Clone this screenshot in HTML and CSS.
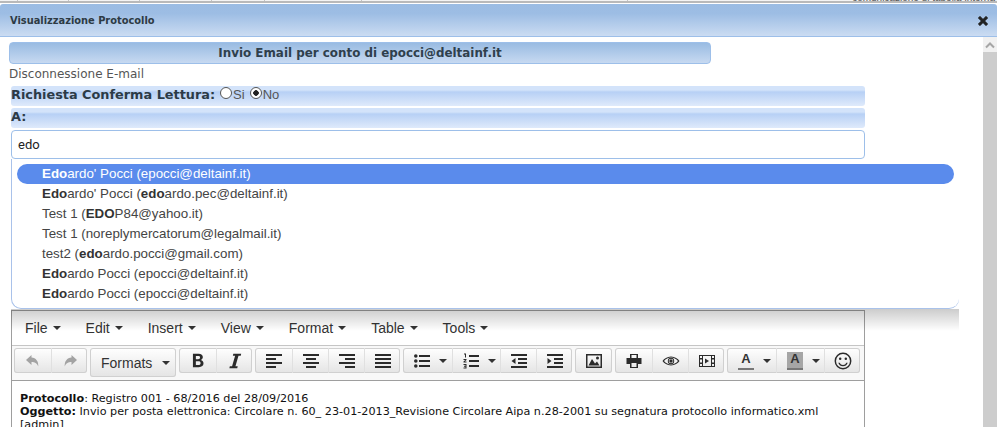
FILE: index.html
```html
<!DOCTYPE html>
<html lang="it">
<head>
<meta charset="utf-8">
<title>Visualizzazione Protocollo</title>
<link rel="stylesheet" href="styles.css">
</head>
<body>
<div class="strip">
  <span class="cell c1"></span><span class="cell c2"></span><span class="cell c3"></span><span class="cell c4"></span><span class="cell c5"></span><span class="cell c6"></span><span class="cell c7"></span>
  <span class="strip-text">comunicazione di tabella interna</span>
</div>
<div class="modal">
  <header class="modal-head">
    <span class="modal-title">Visualizzazione Protocollo</span>
    <svg class="close" viewBox="0 0 12 12" width="12" height="12"><path d="M3 1.200 6 4.200 9 1.200 10.800 3 7.800 6 10.800 9 9 10.800 6 7.800 3 10.800 1.200 9 4.200 6 1.200 3z" fill="#222" stroke="#222" stroke-width=".6" stroke-linejoin="round"/></svg>
  </header>
  <div class="modal-body">
    <main class="content">
      <div class="banner">Invio Email per conto di epocci@deltainf.it</div>
      <div class="disconnect">Disconnessione E-mail</div>
      <div class="field-bar">
        <b class="field-label">Richiesta Conferma Lettura:</b>
        <label class="radio-wrap"><span class="radio"></span>Si</label>
        <label class="radio-wrap"><span class="radio radio-on"></span>No</label>
      </div>
      <div class="field-bar"><b class="field-label">A:</b></div>
      <div class="input-box">edo</div>
      <div class="suggest-anchor">
        <ul class="suggest">
          <li class="active"><b>Edo</b>ardo' Pocci (epocci@deltainf.it)</li>
          <li><b>Edo</b>ardo' Pocci (<b>edo</b>ardo.pec@deltainf.it)</li>
          <li>Test 1 (<b>EDO</b>P84@yahoo.it)</li>
          <li>Test 1 (noreplymercatorum@legalmail.it)</li>
          <li>test2 (<b>edo</b>ardo.pocci@gmail.com)</li>
          <li><b>Edo</b>ardo Pocci (epocci@deltainf.it)</li>
          <li><b>Edo</b>ardo Pocci (epocci@deltainf.it)</li>
        </ul>
        <div class="suggest-shadow"></div>
      </div>
      <section class="editor">
        <nav class="menubar">
          <span class="menu">File<i class="caret"></i></span>
          <span class="menu">Edit<i class="caret"></i></span>
          <span class="menu">Insert<i class="caret"></i></span>
          <span class="menu">View<i class="caret"></i></span>
          <span class="menu">Format<i class="caret"></i></span>
          <span class="menu">Table<i class="caret"></i></span>
          <span class="menu">Tools<i class="caret"></i></span>
        </nav>
        <div class="toolbar">
          <div class="group">
            <span class="btn w36 off"><svg viewBox="0 0 16 16" width="16" height="16"><path d="M6.500 2 1 7l5.500 5V9c3.200 0 5.300 1 6.800 4.500C13.500 8 11 5 6.500 4.500z"/></svg></span>
            <span class="btn w36 off"><svg viewBox="0 0 16 16" width="16" height="16"><path d="M9.500 2 15 7l-5.500 5V9c-3.200 0-5.300 1-6.800 4.500C2.500 8 5 5 9.500 4.500z"/></svg></span>
          </div>
          <div class="group tall"><span class="btn formats">Formats<i class="caret caret-wide"></i></span></div>
          <div class="group">
            <span class="btn w36"><svg viewBox="0 0 16 16" width="18" height="18"><path fill-rule="evenodd" d="M3.500 1.500h5c2.500 0 3.800 1.100 3.800 3 0 1.300-.7 2.200-1.800 2.600 1.500.3 2.400 1.400 2.400 3 0 2.200-1.500 3.400-4.200 3.400H3.500zm2.600 2v2.900h2c1.100 0 1.700-.5 1.700-1.500s-.6-1.400-1.700-1.400zm0 4.800v3.200h2.300c1.200 0 1.900-.6 1.900-1.600s-.7-1.600-1.900-1.600z"/></svg></span>
            <span class="btn w36"><svg viewBox="0 0 16 16" width="18" height="18"><path d="M6.500 1.500h7l-.4 1.800h-2L8.400 12.700h2l-.4 1.800H3l.4-1.800h2l2.700-9.400h-2z"/></svg></span>
          </div>
          <div class="group">
            <span class="btn w36"><svg viewBox="0 0 16 16" width="16" height="16"><path d="M0 1h16v2H0zM0 5h10v2H0zM0 9h16v2H0zM0 13h10v2H0z"/></svg></span>
            <span class="btn w36"><svg viewBox="0 0 16 16" width="16" height="16"><path d="M0 1h16v2H0zM3 5h10v2H3zM0 9h16v2H0zM3 13h10v2H3z"/></svg></span>
            <span class="btn w36"><svg viewBox="0 0 16 16" width="16" height="16"><path d="M0 1h16v2H0zM6 5h10v2H6zM0 9h16v2H0zM6 13h10v2H6z"/></svg></span>
            <span class="btn w36"><svg viewBox="0 0 16 16" width="16" height="16"><path d="M0 1h16v2H0zM0 5h16v2H0zM0 9h16v2H0zM0 13h16v2H0z"/></svg></span>
          </div>
          <div class="group">
            <span class="btn w48"><svg viewBox="0 0 16 16" width="16" height="16"><path d="M5 2h11v2H5zM5 7h11v2H5zM5 12h11v2H5z"/><circle cx="1.800" cy="3" r="1.800"/><circle cx="1.800" cy="8" r="1.800"/><circle cx="1.800" cy="13" r="1.800"/></svg><i class="caret"></i></span>
            <span class="btn w48"><svg viewBox="0 0 16 16" width="16" height="16"><path d="M6 2h10v2H6zM6 7h10v2H6zM6 12h10v2H6zM1 .5h2v4H2V1.500H1zM.500 6h3v1L1.800 8.500h1.700v1h-3v-1L2.200 7H.500zM.500 11h3v4.500h-3v-1h2v-.8h-1.500v-.9h1.500V12h-2z"/></svg><i class="caret"></i></span>
            <span class="btn w36"><svg viewBox="0 0 16 16" width="16" height="16"><path d="M0 1h16v2H0zM7 5h9v2H7zM7 9h9v2H7zM0 13h16v2H0zM4.500 5v6L.500 8z"/></svg></span>
            <span class="btn w36"><svg viewBox="0 0 16 16" width="16" height="16"><path d="M0 1h16v2H0zM7 5h9v2H7zM7 9h9v2H7zM0 13h16v2H0zM.500 5v6l4-3z"/></svg></span>
          </div>
          <div class="group">
            <span class="btn w36"><svg viewBox="0 0 16 16" width="16" height="16"><path fill-rule="evenodd" d="M0 1h16v14H0zm1.500 1.500v11h13v-11z"/><path d="M2.500 12.500 6 6l3 4.500 2-2 2.500 4z"/><circle cx="11.500" cy="5" r="1.500"/></svg></span>
          </div>
          <div class="group">
            <span class="btn w36"><svg viewBox="0 0 16 16" width="16" height="16"><path fill-rule="evenodd" d="M4 1h8v4h3.500v6H12v4H4v-4H.500V5H4zm1.500 1v3h5V2zm0 8v4h5v-4z"/></svg></span>
            <span class="btn w36"><svg viewBox="0 0 18 16" width="18" height="16"><path fill-rule="evenodd" d="M9 3.500c3.900 0 6.900 2.200 8.500 4.500C15.900 10.300 12.900 12.500 9 12.500S2.100 10.300.500 8C2.100 5.700 5.100 3.500 9 3.500zm0 1C6.300 4.500 3.800 5.900 2 8c1.800 2.100 4.300 3.500 7 3.500s5.200-1.400 7-3.500c-1.800-2.100-4.300-3.500-7-3.500z"/><path fill-rule="evenodd" d="M9 4.800a3.200 3.200 0 1 1 0 6.400 3.200 3.200 0 0 1 0-6.400zm0 .9a2.300 2.300 0 1 0 0 4.600 2.300 2.300 0 0 0 0-4.600z"/><circle cx="9" cy="8" r="1.700"/></svg></span>
            <span class="btn w36"><svg viewBox="0 0 16 16" width="16" height="16"><path fill-rule="evenodd" d="M0 2h16v12H0zm1 1v2h2V3zm0 3.500v3h2v-3zM1 11v2h2v-2zM13 3v2h2V3zm0 3.500v3h2v-3zm0 4.500v2h2v-2zM4 3v10h8V3z"/><path d="M6 5.500v5L10 8z"/></svg></span>
          </div>
          <div class="group">
            <span class="btn w48"><span class="color-a">A</span><i class="caret"></i></span>
            <span class="btn w48"><span class="color-a color-bg">A</span><i class="caret"></i></span>
            <span class="btn w36"><svg viewBox="0 0 16 16" width="18" height="18"><path fill-rule="evenodd" d="M8 .5a7.500 7.500 0 1 1 0 15 7.500 7.500 0 0 1 0-15zm0 1.300a6.200 6.200 0 1 0 0 12.400A6.200 6.200 0 0 0 8 1.800z"/><circle cx="5.500" cy="6" r="1.100"/><circle cx="10.500" cy="6" r="1.100"/><path d="M3.800 9.500h1.300c.6 1.300 1.600 2 2.900 2s2.300-.7 2.900-2h1.300c-.7 2-2.200 3.200-4.200 3.200S4.500 11.500 3.800 9.500z"/></svg></span>
          </div>
        </div>
        <div class="editor-text">
          <div><b>Protocollo</b>: Registro 001 - 68/2016 del 28/09/2016</div>
          <div><b>Oggetto:</b> Invio per posta elettronica: Circolare n. 60_ 23-01-2013_Revisione Circolare Aipa n.28-2001 su segnatura protocollo informatico.xml</div>
          <div>[admin]</div>
        </div>
      </section>
    </main>
    <aside class="scrollbar"><div class="scroll-up"><svg viewBox="0 0 10 8" width="10" height="8"><path d="M1 6.500 5 2.500l4 4" fill="none" stroke="#a6a6a6" stroke-width="2"/></svg></div></aside>
  </div>
</div>
</body>
</html>
```
FILE: styles.css
```css
html, body { margin: 0; padding: 0; height: 427px; overflow: hidden; background: #fff; }
body { font-family: "Liberation Sans", Arial, sans-serif; color: #333; }
.strip { height: 4px; box-sizing: border-box; overflow: hidden; display: flex; background: linear-gradient(#f4f4f4 0, #f4f4f4 1px, #b9b9b9 1px, #b9b9b9 3px, #fff 3px); }
.cell { display: block; height: 1px; box-sizing: border-box; border-right: 1px solid #c4c4c4; flex: none; }
.c1 { width: 18px; } .c2 { width: 51px; } .c3 { width: 71px; } .c4 { width: 72px; } .c5 { width: 53px; } .c6 { width: 97px; } .c7 { width: 266px; }
.strip-text { display: block; flex: 1; text-align: right; font-size: 10px; line-height: 10px; margin-top: -7px; color: #555; padding-right: 2px; }
.modal { height: 423px; display: flex; flex-direction: column; }
.modal-head { height: 33px; box-sizing: border-box; flex: none; display: flex; align-items: center; justify-content: space-between; padding: 0 8px 0 10px; background: linear-gradient(#9bbce3 0, #9dbde4 30%, #cbdcf2 100%); border-bottom: 1px solid #9dbfe9; border-radius: 3px 3px 0 0; }
.modal-title { font: bold 9.850px "DejaVu Sans", sans-serif; color: #2d3a44; }
.close { display: block; margin-top: 1px; }
.modal-body { flex: 1; min-height: 0; display: flex; }
.content { flex: 1; min-width: 0; padding: 5px 0 0 0; overflow: hidden; }
.banner { width: 702px; height: 22px; box-sizing: border-box; margin-left: 9px; border: 1px solid #9dbfe9; border-radius: 4px; background: linear-gradient(#99bbe2, #c7d9f1); font: bold 11.900px/20px "DejaVu Sans", sans-serif; color: #2f3f4c; text-align: center; }
.disconnect { margin: 2px 0 0 9px; font: 12px/17px "DejaVu Sans", sans-serif; color: #555; height: 20px; }
.field-bar { width: 854px; height: 20px; margin: 0 0 2px 11px; border-radius: 3px; background: linear-gradient(#d3e3fa 0, #d3e3fa 20%, #b7d0f5 30%, #dfeafb 100%); display: flex; align-items: flex-start; font: 13px/18px "Liberation Sans", sans-serif; color: #555; }
.field-label { font: bold 12.850px/17px "DejaVu Sans", sans-serif; color: #2c3b47; margin-right: 5px; }
.radio-wrap { display: flex; align-items: flex-start; margin-right: 5px; }
.radio { width: 12px; height: 12px; box-sizing: border-box; border: 1px solid #555; border-radius: 50%; background: #fff; display: block; margin: 1px 1px 0 0; }
.radio-on { background: radial-gradient(circle, #222 0, #222 2.500px, #fff 3px); }
.input-box { width: 854px; height: 29px; box-sizing: border-box; margin-left: 11px; border: 1px solid #9dbfe9; border-radius: 4px; background: #fff; padding-left: 6px; font: 13px/28px Roboto, sans-serif; color: #222; }
.suggest-anchor { position: relative; width: 948px; height: 150px; margin-left: 11px; }
.suggest { position: absolute; z-index: 2; inset: 0; margin: 0; list-style: none; box-sizing: border-box; padding: 5px; background: #fff; border: 1px solid #a9c2ea; border-top: 0; border-right: 0; border-radius: 0 0 10px 10px; font-size: 13.330px; line-height: 20px; color: #444; }
.suggest li { height: 20px; padding-left: 25px; border-radius: 10px; }
.suggest b { color: #333; }
.suggest .active { background: #5a8bec; color: #fff; }
.suggest .active b { color: #fff; }
.suggest-shadow { position: absolute; z-index: 1; left: 0; right: 0; top: 150px; height: 22px; background: linear-gradient(rgba(0,0,0,.2), rgba(0,0,0,0)); }
.editor { width: 854px; height: 200px; box-sizing: border-box; margin: 1px 0 0 11px; border: 1px solid #9e9e9e; background: #fff; }
.menubar { height: 35px; box-sizing: border-box; display: flex; align-items: center; gap: 25px; padding: 0 0 0 13px; background: #fff; border-bottom: 1px solid #c5c5c5; font-size: 14px; color: #333; }
.menu { display: flex; align-items: center; }
.caret { display: inline-block; width: 0; height: 0; border: 4px solid transparent; border-top-color: #333; border-bottom: 0; margin-left: 5px; }
.toolbar { height: 35px; box-sizing: border-box; display: flex; align-items: flex-start; gap: 3px; padding: 2px 2px 0; background: #f8f8f8; border-bottom: 1px solid #9e9e9e; }
.group { display: flex; height: 25px; padding-left: 1px; box-shadow: inset 0 0 0 1px #d0d0d0; border-radius: 3px; background: linear-gradient(#fff, #e4e4e4); box-sizing: border-box; }
.group.tall { height: 29px; }
.btn { display: flex; align-items: center; justify-content: center; box-sizing: border-box; height: 100%; color: #333; }
.btn + .btn { border-left: 1px solid #e0e0e0; }
.btn svg { fill: #2b2b2b; display: block; }
.off svg { fill: #a3a3a3; }
.w36 { width: 36px; }
.w48 { width: 48px; justify-content: flex-start; padding-left: 10px; }
.w48 .caret { margin-left: 9px; }
.formats { width: 85px; font-size: 14px; justify-content: flex-start; padding-left: 10px; }
.caret-wide { margin-left: 10px; }
.color-a { display: block; width: 16px; height: 16px; text-align: center; font: bold 13px/14px "Liberation Sans", sans-serif; color: #333; border-bottom: 2px solid #777; box-sizing: content-box; }
.color-bg { background: #a6a6a6; }
.editor-text { padding: 11px 8px 0; font: 11.200px/13px "DejaVu Sans", sans-serif; color: #111; }
.editor-text b { color: #111; }
.scrollbar { width: 14px; flex: none; background: #cdcdcd; }
.scroll-up { height: 15px; background: #f1f1f1; display: flex; align-items: center; justify-content: center; }
.scroll-up svg { display: block; }
```
